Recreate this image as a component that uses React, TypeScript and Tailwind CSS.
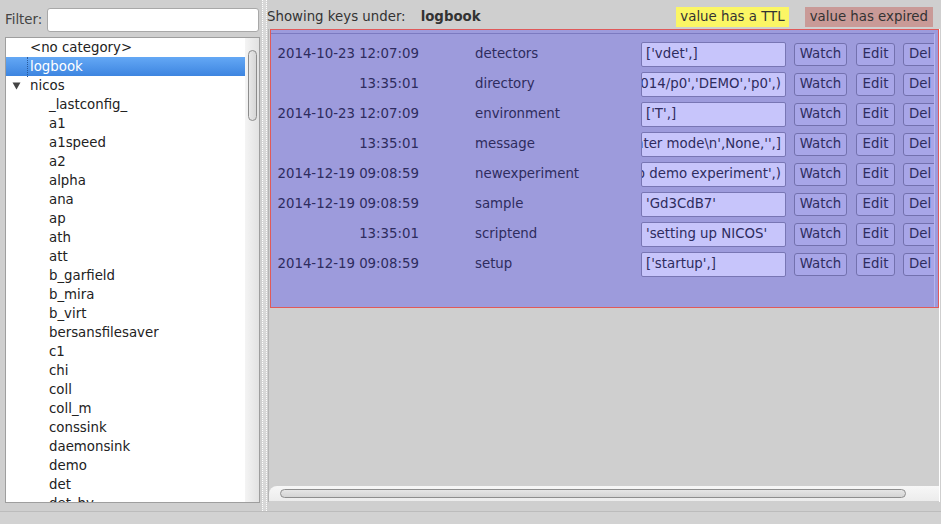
import React from "react";

const treeItems: { label: string; depth: number; arrow?: boolean; selected?: boolean }[] = [
  { label: "<no category>", depth: 1 },
  { label: "logbook", depth: 1, selected: true },
  { label: "nicos", depth: 1, arrow: true },
  ...[
    "_lastconfig_",
    "a1",
    "a1speed",
    "a2",
    "alpha",
    "ana",
    "ap",
    "ath",
    "att",
    "b_garfield",
    "b_mira",
    "b_virt",
    "bersansfilesaver",
    "c1",
    "chi",
    "coll",
    "coll_m",
    "conssink",
    "daemonsink",
    "demo",
    "det",
    "det_hv",
  ].map((label) => ({ label, depth: 2 })),
];

const keys = [
  { time: "2014-10-23 12:07:09", key: "detectors", value: "['vdet',]" },
  { time: "13:35:01", key: "directory", value: "('/data/2014/p0','DEMO','p0',)", clip: true },
  { time: "2014-10-23 12:07:09", key: "environment", value: "['T',]" },
  { time: "13:35:01", key: "message", value: "['Simulation mode: enter mode\\n',None,'',]", clip: true },
  { time: "2014-12-19 09:08:59", key: "newexperiment", value: "('Setting up demo experiment',)", clip: true },
  { time: "2014-12-19 09:08:59", key: "sample", value: "'Gd3CdB7'" },
  { time: "13:35:01", key: "scriptend", value: "'setting up NICOS'" },
  { time: "2014-12-19 09:08:59", key: "setup", value: "['startup',]" },
];

function KeyRow({ time, keyName, value, clip }: { time: string; keyName: string; value: string; clip?: boolean }) {
  return (
    <div className="flex items-center h-[30px] shrink-0 text-[#2e2c5e]">
      <div className="w-[148px] shrink-0 pl-[6px] text-right whitespace-nowrap">{time}</div>
      <div className="w-[56px] shrink-0" />
      <div className="w-[166px] shrink-0 whitespace-nowrap">{keyName}</div>
      <div
        className={
          clip
            ? "w-[145px] h-[25px] shrink-0 flex items-center justify-end overflow-hidden whitespace-nowrap rounded-[2px] border border-[#7876b4] bg-[#c7c5fb] pr-[4px]"
            : "w-[145px] h-[25px] shrink-0 flex items-center overflow-hidden whitespace-nowrap rounded-[2px] border border-[#7876b4] bg-[#c7c5fb] pl-[4px]"
        }
      >
        {value}
      </div>
      <button className="ml-[8px] w-[53px] h-[23px] shrink-0 rounded-[3px] border border-[#7371ae] bg-[#a8a6e8] text-[#2e2c5e]">
        Watch
      </button>
      <button className="ml-[9px] w-[39px] h-[23px] shrink-0 rounded-[3px] border border-[#7371ae] bg-[#a8a6e8] text-[#2e2c5e]">
        Edit
      </button>
      <button className="ml-[8px] w-[44px] h-[23px] shrink-0 rounded-[3px] border border-[#7371ae] bg-[#a8a6e8] text-left pl-[5px] text-[#2e2c5e]">
        Del
      </button>
    </div>
  );
}

export default function App() {
  return (
    <div
      className="w-[941px] h-[524px] bg-[#cfcfcf] flex flex-col overflow-hidden text-[13.33px] text-[#2b2b2b]"
      style={{ fontFamily: '"DejaVu Sans", sans-serif' }}
    >
      <div className="flex flex-1 min-h-0">
        {/* left: filter + tree */}
        <div className="w-[262px] flex flex-col pl-[5px] pt-[8px]">
          <div className="flex items-center h-[24px] pr-[3px]">
            <span className="w-[42px] text-[#444]">Filter:</span>
            <div className="flex-1 h-[24px] bg-white border border-[#a8a8a8] rounded-[3px]" />
          </div>
          <div className="mt-[5px] h-[466px] mr-[2px] flex bg-white border border-[#9e9e9e] overflow-hidden">
            <div className="flex-1 flex flex-col overflow-hidden">
              {treeItems.map((it, i) => (
                <div
                  key={i}
                  className={
                    it.selected
                      ? "h-[19px] shrink-0 flex items-center bg-gradient-to-b from-[#64a8f5] to-[#3d85e0] text-white"
                      : "h-[19px] shrink-0 flex items-center text-[#222]"
                  }
                >
                  <div className={it.depth === 1 ? "w-[21px] shrink-0 flex justify-center" : "w-[43px] shrink-0"}>
                    {it.arrow && (
                      <svg width="9" height="8" viewBox="0 0 9 8">
                        <path d="M0.5 0.5 L8.5 0.5 L4.5 7.5 Z" fill="#444" />
                      </svg>
                    )}
                  </div>
                  <span
                    className={
                      it.selected
                        ? "border-l border-dotted border-[#2a5a99] pl-[2px] whitespace-nowrap"
                        : it.depth === 1
                        ? "pl-[3px] whitespace-nowrap"
                        : "whitespace-nowrap"
                    }
                  >
                    {it.label}
                  </span>
                </div>
              ))}
            </div>
            <div className="w-[14px] shrink-0 bg-gradient-to-r from-[#f4f4f4] to-[#e2e2e2] flex justify-center pt-[12px]">
              <div className="w-[9px] h-[71px] rounded-full border border-[#8c8c8c] bg-gradient-to-r from-[#e8e8e8] to-[#d6d6d6]" />
            </div>
          </div>
        </div>

        {/* splitter */}
        <div className="w-[5px] border-x border-dotted border-white bg-[#d8d8d8]" />

        {/* right */}
        <div className="flex-1 flex flex-col min-w-0">
          <div className="h-[29px] pt-[4px] flex items-center">
            <span className="text-[#333]">Showing keys under:</span>
            <span className="ml-[15px] font-bold text-[#333]">logbook</span>
            <span className="ml-auto h-[20px] px-[4px] flex items-center bg-[#fbf665] text-[#333]">value has a TTL</span>
            <span className="ml-[16px] mr-[8px] h-[20px] px-[5px] flex items-center bg-[#c99a97] text-[#333]">
              value has expired
            </span>
          </div>
          <div className="h-[473px] ml-[1px] mr-[1px] border-l border-[#b4b4b4] border-r border-r-white flex flex-col">
            <div className="h-[279px] ml-[1px] border border-[#e05a5a] bg-[#9d9bdc] flex flex-col">
              <div className="mt-[3px] mr-[3px] flex-1 border-t border-[#7c7ac0] border-r border-r-[#b7b5ee] overflow-hidden flex flex-col pt-[5px]">
                {keys.map((k, i) => (
                  <KeyRow key={i} time={k.time} keyName={k.key} value={k.value} clip={k.clip} />
                ))}
              </div>
            </div>
            <div className="flex-1" />
            <div className="h-[15px] mb-[1px] rounded-tl-[8px] bg-gradient-to-b from-[#f7f7f7] to-[#ececec] flex items-center pl-[11px] pr-[33px]">
              <div className="flex-1 h-[9px] rounded-full border border-[#8e8e8e] bg-gradient-to-b from-[#e6e6e6] to-[#d4d4d4]" />
            </div>
          </div>
        </div>
      </div>
      <div className="h-[13px] border-t border-[#bcbcbc] bg-[#d2d2d2]" />
    </div>
  );
}
